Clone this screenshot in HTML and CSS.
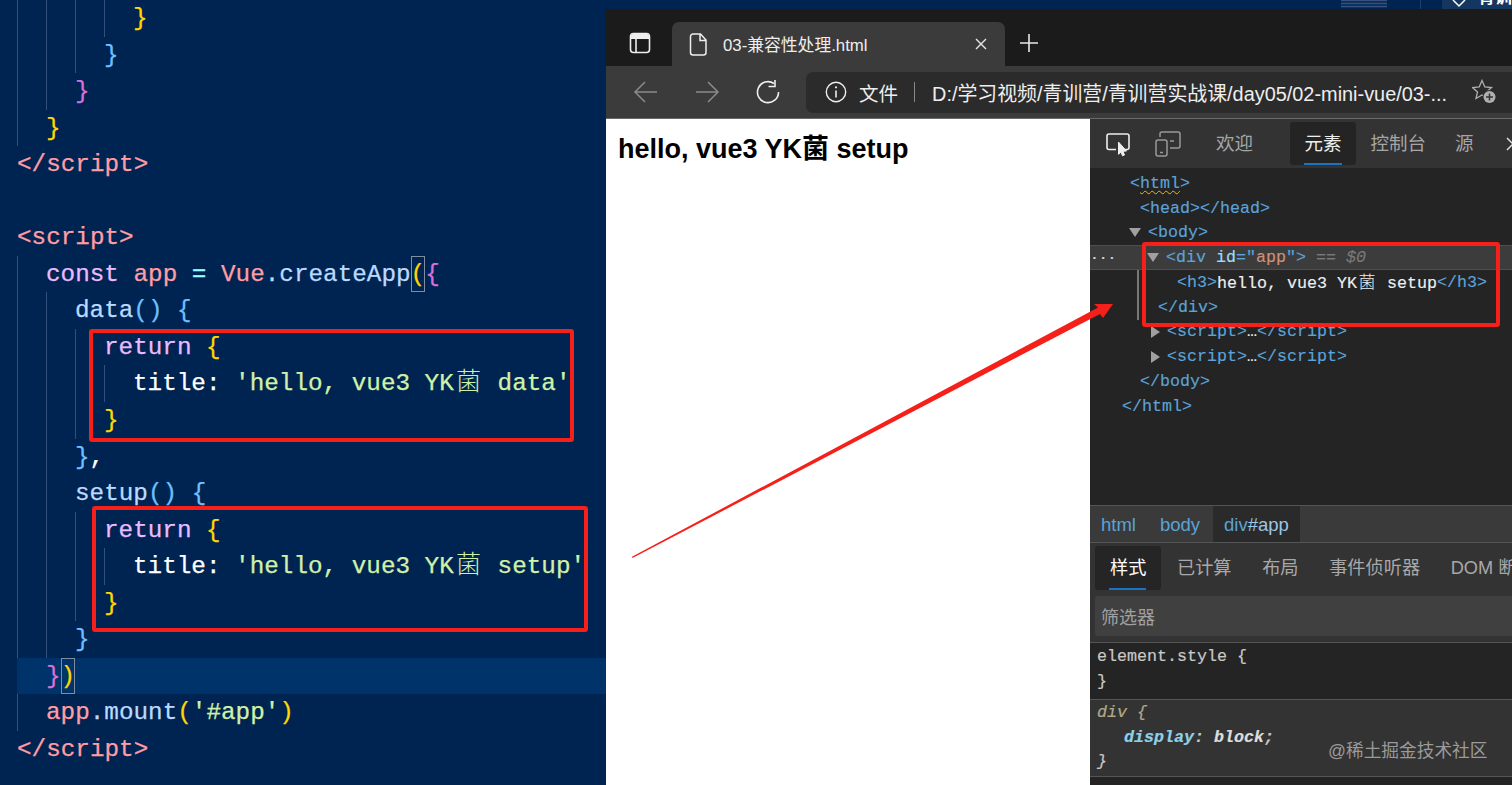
FILE: index.html
```html
<!DOCTYPE html>
<html>
  <head>
    <title>03-兼容性处理</title>
    <link rel="stylesheet" href="styles.css">
  </head>
  <body>
    <div class="desktop">

      <div class="topstrip">
        <div class="mini"></div>
        <div class="strip-line"></div>
        <div class="strip-panel">
          <svg class="strip-chev" width="14" height="8" viewBox="0 0 14 8"><path d="M1 0l6 6 6-6" fill="none" stroke="#fff" stroke-width="1.500"/></svg>
          <span class="strip-text">青训营</span>
        </div>
      </div>

      <div class="editor">
        <div class="line"><i class="ind"></i><i class="ind"></i><i class="ind"></i><i class="ind"></i><span class="yel">}</span></div>
        <div class="line"><i class="ind"></i><i class="ind"></i><i class="ind"></i><span class="blu">}</span></div>
        <div class="line"><i class="ind"></i><i class="ind"></i><span class="pnk">}</span></div>
        <div class="line"><i class="ind"></i><span class="yel">}</span></div>
        <div class="line"><span class="tag">&lt;/script&gt;</span></div>
        <div class="line"></div>
        <div class="line"><span class="tag">&lt;script&gt;</span></div>
        <div class="line"><i class="ind"></i><span class="kw">const</span>&nbsp;<span class="tag">app</span>&nbsp;<span class="op">=</span>&nbsp;<span class="tag">Vue</span><span class="fn">.createApp</span><span class="yel match">(</span><span class="pnk">{</span></div>
        <div class="line"><i class="ind"></i><i class="ind"></i><span class="fn">data</span><span class="blu">()</span>&nbsp;<span class="blu">{</span></div>
        <div class="line"><i class="ind"></i><i class="ind"></i><i class="ind"></i><span class="kw">return</span>&nbsp;<span class="yel">{</span></div>
        <div class="line"><i class="ind"></i><i class="ind"></i><i class="ind"></i><i class="ind"></i><span class="wht">title:</span>&nbsp;<span class="str">'hello, vue3 YK<span class="cjk">菌</span> data'</span></div>
        <div class="line"><i class="ind"></i><i class="ind"></i><i class="ind"></i><span class="yel">}</span></div>
        <div class="line"><i class="ind"></i><i class="ind"></i><span class="blu">}</span><span class="wht">,</span></div>
        <div class="line"><i class="ind"></i><i class="ind"></i><span class="fn">setup</span><span class="blu">()</span>&nbsp;<span class="blu">{</span></div>
        <div class="line"><i class="ind"></i><i class="ind"></i><i class="ind"></i><span class="kw">return</span>&nbsp;<span class="yel">{</span></div>
        <div class="line"><i class="ind"></i><i class="ind"></i><i class="ind"></i><i class="ind"></i><span class="wht">title:</span>&nbsp;<span class="str">'hello, vue3 YK<span class="cjk">菌</span> setup'</span></div>
        <div class="line"><i class="ind"></i><i class="ind"></i><i class="ind"></i><span class="yel">}</span></div>
        <div class="line"><i class="ind"></i><i class="ind"></i><span class="blu">}</span></div>
        <div class="line current"><i class="ind noline"></i><span class="pnk">}</span><span class="yel match">)</span></div>
        <div class="line"><i class="ind"></i><span class="tag">app</span><span class="fn">.mount</span><span class="yel">(</span><span class="str">'#app'</span><span class="yel">)</span></div>
        <div class="line"><span class="tag">&lt;/script&gt;</span></div>
      </div>

      <div class="browser">
        <div class="titlebar">
          <svg class="side-icon" width="22" height="22" viewBox="0 0 22 22"><rect x="1.500" y="1.500" width="19" height="19" rx="3" fill="none" stroke="#eee" stroke-width="1.600"/><path d="M7 7v13" fill="none" stroke="#eee" stroke-width="1.600"/><path d="M2 7V4a2 2 0 0 1 2-2h14a2 2 0 0 1 2 2v3z" fill="#eee"/></svg>
          <div class="tab">
            <svg width="18" height="23" viewBox="0 0 18 23"><path d="M4 1h7.500L17 7v12.500a2.500 2.500 0 0 1-2.500 2.500H4a2.500 2.500 0 0 1-2.500-2.500V3.500A2.500 2.500 0 0 1 4 1zM11 1.500V7.500h6" fill="none" stroke="#eee" stroke-width="1.500"/></svg>
            <span class="tab-name">03-兼容性处理.html</span>
            <svg class="tab-x" width="12" height="12" viewBox="0 0 12 12"><path d="M1 1l10 10M11 1L1 11" stroke="#e8e8e8" stroke-width="1.400"/></svg>
          </div>
          <svg class="plus" width="20" height="20" viewBox="0 0 20 20"><path d="M10 1v18M1 10h18" stroke="#e8e8e8" stroke-width="1.600"/></svg>
        </div>

        <div class="toolbar">
          <svg class="nav" width="26" height="24" viewBox="0 0 26 24"><path d="M24 12H2M12 2L2 12l10 10" fill="none" stroke="#8a8a8a" stroke-width="1.500"/></svg>
          <svg class="nav" width="26" height="24" viewBox="0 0 26 24"><path d="M2 12h22M14 2l10 10-10 10" fill="none" stroke="#8a8a8a" stroke-width="1.500"/></svg>
          <svg class="nav" width="26" height="26" viewBox="0 0 26 26"><path d="M19 4.500A10.500 10.500 0 1 0 23.500 13" fill="none" stroke="#eee" stroke-width="1.600"/><path d="M20 1v6.500h-6.500" fill="none" stroke="#eee" stroke-width="1.600"/></svg>
          <div class="address">
            <svg width="22" height="22" viewBox="0 0 22 22"><circle cx="11" cy="11" r="9.700" fill="none" stroke="#eee" stroke-width="1.400"/><path d="M11 9.500v7" stroke="#eee" stroke-width="1.600"/><circle cx="11" cy="6.300" r="1.100" fill="#eee"/></svg>
            <span class="addr-file">文件</span>
            <span class="addr-sep"></span>
            <span class="addr-url">D:/学习视频/青训营/青训营实战课/day05/02-mini-vue/03-...</span>
            <svg class="star" width="26" height="26" viewBox="0 0 26 26"><path d="M10 1.500L12.800 8 19.500 8.600 14.500 13 16 19.500 10 16 4 19.500 5.500 13 .500 8.600 7.200 8z" fill="none" stroke="#b0b0b0" stroke-width="1.300"/><circle cx="17.500" cy="18" r="7" fill="#2b2b2b"/><circle cx="17.500" cy="18" r="6" fill="#b0b0b0"/><path d="M17.500 14.500v7M14 18h7" stroke="#333" stroke-width="1.500"/></svg>
          </div>
        </div>

        <div class="main">
          <div class="page">
            <h3 class="page-title">hello, vue3 YK菌 setup</h3>
          </div>

          <div class="devtools">
            <div class="dt-tabs">
              <svg class="dt-icon" width="26" height="26" viewBox="0 0 26 26"><path d="M11 18.500H4a2 2 0 0 1-2-2V5a2 2 0 0 1 2-2h18a2 2 0 0 1 2 2v11.500a2 2 0 0 1-2 2h-2" fill="none" stroke="#eee" stroke-width="1.600"/><path d="M13.500 11l8 9-3.500.3 1.500 3.700-2 .8-1.500-3.700-2.500 2.200z" fill="#eee" stroke="#eee" stroke-width="1"/></svg>
              <svg class="dt-icon2" width="26" height="26" viewBox="0 0 26 26"><rect x="1" y="9" width="11" height="16" rx="2" fill="none" stroke="#999" stroke-width="1.500"/><path d="M5 6V3a2 2 0 0 1 2-2h16a2 2 0 0 1 2 2v12a2 2 0 0 1-2 2h-8M19 10h-4" fill="none" stroke="#999" stroke-width="1.500"/><path d="M5 21.500h3" stroke="#999" stroke-width="1.500"/></svg>
              <span class="dt-tab first">欢迎</span>
              <span class="dt-tab on">元素</span>
              <span class="dt-tab">控制台</span>
              <span class="dt-tab">源</span>
              <svg class="dt-more" width="12" height="14" viewBox="0 0 12 14"><path d="M1 1l6 6-6 6" fill="none" stroke="#ddd" stroke-width="1.500"/></svg>
            </div>

            <div class="tree">
              <div class="row p-html"><span class="t">&lt;</span><span class="t wavy">html</span><span class="t">&gt;</span></div>
              <div class="row p-head"><span class="t">&lt;head&gt;&lt;/head&gt;</span></div>
              <div class="row p-body"><i class="tri-down"></i><span class="t">&lt;body&gt;</span></div>
              <div class="row p-div sel"><span class="dots">•••</span><i class="tri-down"></i><span class="t">&lt;div</span>&nbsp;<span class="t-attr">id</span><span class="t">=</span><span class="t">"</span><span class="t-val">app</span><span class="t">"&gt;</span>&nbsp;<span class="t-eq">== $0</span></div>
              <div class="row p-h3 guide"><span class="t">&lt;h3&gt;</span><span class="t-txt">hello, vue3 YK<span class="cjk-s">菌</span> setup</span><span class="t">&lt;/h3&gt;</span></div>
              <div class="row p-cdiv guide"><span class="t">&lt;/div&gt;</span></div>
              <div class="row p-script"><i class="tri-right"></i><span class="t">&lt;script&gt;</span><span class="t-txt">…</span><span class="t">&lt;/script&gt;</span></div>
              <div class="row p-script"><i class="tri-right"></i><span class="t">&lt;script&gt;</span><span class="t-txt">…</span><span class="t">&lt;/script&gt;</span></div>
              <div class="row p-head"><span class="t">&lt;/body&gt;</span></div>
              <div class="row p-chtml"><span class="t">&lt;/html&gt;</span></div>
            </div>

            <div class="crumbs">
              <span class="crumb">html</span>
              <span class="crumb">body</span>
              <span class="crumb on">div<span class="crumb-hash">#app</span></span>
            </div>

            <div class="subtabs">
              <span class="subtab on">样式</span>
              <span class="subtab">已计算</span>
              <span class="subtab">布局</span>
              <span class="subtab">事件侦听器</span>
              <span class="subtab">DOM 断点</span>
            </div>

            <div class="filter-wrap">
              <div class="filter">筛选器</div>
            </div>

            <div class="rule dark">
              <div>element.style {</div>
              <div>}</div>
            </div>
            <div class="rule lite">
              <div class="it sel-name">div {</div>
              <div class="it decl"><span class="prop">display</span>: <span class="pval">block</span>;</div>
              <div class="it">}</div>
            </div>
          </div>
        </div>
      </div>

      <div class="redbox box-a"></div>
      <div class="redbox box-b"></div>
      <div class="redbox box-c"></div>

      <svg class="arrow" width="1512" height="785" viewBox="0 0 1512 785">
        <path d="M632 556.700L1098 307.500 1094 304 1113 304 1103 318 1100 314 632.500 558z" fill="#f5201a"/>
      </svg>

      <div class="watermark">@稀土掘金技术社区</div>
    </div>
  </body>
</html>
```

FILE: styles.css
```css
body{
  margin: 0;
  background-color: #002451;
}

.desktop{
  position: relative;
  width: 1512px;
  height: 785px;
  overflow: hidden;
  background-color: #002451;
}

/* bit of the other window above the browser */
.topstrip{
  position: absolute;
  top: 0;
  left: 1341px;
  right: 0;
  height: 9px;
  display: flex;
  overflow: hidden;
}

.mini{
  flex: none;
  width: 46px;
  height: 8px;
  opacity: 0.6;
  background: repeating-linear-gradient(#5d7099 0 1px, #1b3a68 1px 3px);
}

.strip-line{
  flex: none;
  width: 1px;
  margin-left: 33px;
  background-color: #1f3f6b;
}

.strip-panel{
  flex: 1;
  min-width: 0;
  margin-left: 21px;
  background-color: #15365f;
  padding-left: 10px;
  display: flex;
  gap: 12px;
  overflow: hidden;
}

.strip-chev{
  flex: none;
}

.strip-text{
  font: bold 17px "Noto Sans CJK SC", sans-serif;
  color: #fff;
  line-height: 24px;
  margin-top: -16px;
  white-space: nowrap;
}

/* code editor */
.editor{
  width: 607px;
  font-family: "Liberation Mono", "Noto Sans CJK SC", monospace;
  font-size: 24.3px;
  -webkit-text-stroke: 0.25px;
  color: #fff;
}

.line{
  height: 36.55px;
  line-height: 37px;
  display: flex;
  white-space: pre;
  padding-left: 17px;
}

.current{
  background-color: #003369;
  margin-left: 17px;
  padding-left: 0;
}

.ind{
  width: 29px;
  height: 36.6px;
  flex: none;
  box-sizing: border-box;
  border-left: 1px solid #33507b;
}

.noline{
  border-left-color: transparent;
}

.tag{ color: #ff9da4; }
.kw{ color: #ebbbff; }
.fn{ color: #bbdaff; }
.op{ color: #99ffff; }
.wht{ color: #fff; }
.str{ color: #d1f1a9; }
.yel{ color: #ffd700; }
.pnk{ color: #da70d6; }
.blu{ color: #6cc0ff; }

.match{
  box-sizing: border-box;
  width: 14.6px;
  height: 36px;
  outline: 1px solid #7f8d9e;
  outline-offset: -1px;
}

.cjk{
  display: inline-block;
  width: 29.2px;
  font-family: "Noto Sans CJK SC", sans-serif;
  font-weight: 300;
  font-size: 25px;
  line-height: 1;
  text-align: center;
  -webkit-text-stroke: 0;
}

/* browser window */
.browser{
  position: absolute;
  left: 606px;
  top: 9px;
  width: 906px;
  height: 776px;
  display: flex;
  flex-direction: column;
  font-family: "Liberation Sans", "Noto Sans CJK SC", sans-serif;
  background-color: #1b1b1b;
}

.titlebar{
  height: 57px;
  flex: none;
  display: flex;
  align-items: flex-end;
  background-color: #1b1b1b;
}

.side-icon{
  margin: 0 21px 12px 23px;
}

.tab{
  width: 333px;
  height: 44px;
  box-sizing: border-box;
  background-color: #3b3b3b;
  border-radius: 7px 7px 0 0;
  display: flex;
  align-items: center;
  padding: 0 18px 0 17px;
  color: #eee;
  font-size: 16.800px;
}

.tab-name{
  margin-left: 16px;
  flex: 1;
}

.plus{
  margin: 0 0 13px 14px;
}

.toolbar{
  height: 53px;
  flex: none;
  display: flex;
  align-items: center;
  gap: 35px;
  padding-left: 27px;
  box-sizing: border-box;
  background-color: #3b3b3b;
  border-bottom: 1px solid #6a6a6a;
}

.address{
  flex: 1;
  height: 41px;
  margin-left: -10px;
  border-radius: 7px 0 0 7px;
  background-color: #2b2b2b;
  display: flex;
  align-items: center;
  padding-left: 19px;
  color: #eee;
}

.addr-file{
  font-size: 19.500px;
  margin-left: 12px;
}

.addr-sep{
  width: 1px;
  height: 20px;
  margin: 0 17px 0 16px;
  background-color: #888;
}

.addr-url{
  font-size: 19.900px;
  width: 514px;
  white-space: nowrap;
}

.star{
  flex: none;
  margin-left: 26px;
}

.main{
  flex: 1;
  min-height: 0;
  display: flex;
}

.page{
  width: 484px;
  flex: none;
  background-color: #fff;
}

.page-title{
  margin: 13px 0 0 12px;
  font-size: 27px;
  line-height: 34px;
  font-weight: bold;
  color: #000;
}

/* devtools */
.devtools{
  flex: 1;
  min-width: 0;
  overflow: hidden;
  display: flex;
  flex-direction: column;
  background-color: #242424;
  color: #ccc;
}

.dt-tabs{
  height: 49px;
  flex: none;
  display: flex;
  align-items: center;
  background-color: #333;
  box-sizing: border-box;
  font-size: 18.500px;
  color: #a6a6a6;
}

.dt-icon{
  flex: none;
  margin-left: 15px;
}

.dt-icon2{
  flex: none;
  margin-left: 24px;
}

.dt-tab{
  flex: none;
  padding: 0 14.500px;
  height: 43px;
  line-height: 43px;
  white-space: nowrap;
  box-sizing: border-box;
}

.dt-tab.first{
  margin-left: 20.500px;
  margin-right: 22.500px;
}

.dt-tab.on{
  color: #eee;
  background-color: #242424;
  border-radius: 3px;
  background-image: linear-gradient(#1a74c0, #1a74c0);
  background-repeat: no-repeat;
  background-size: 38px 2px;
  background-position: 14px 41px;
}

.dt-more{
  flex: none;
  margin-left: 18px;
}

.tree{
  height: 337px;
  flex: none;
  padding-top: 3px;
  box-sizing: border-box;
  font-family: "Liberation Mono", "Noto Sans CJK SC", monospace;
  font-size: 16.670px;
  -webkit-text-stroke: 0.15px;
}

.row{
  height: 24.780px;
  display: flex;
  align-items: center;
  white-space: pre;
  box-sizing: border-box;
}

.t{ color: #5ba3d8; }
.t-attr{ color: #9cdcfe; }
.t-val{ color: #ce9178; }
.t-txt{ color: #eee; }
.t-eq{ color: #7a7a7a; font-style: italic; }

.wavy{
  text-decoration: underline wavy #e4b820 1px;
  text-underline-offset: 2px;
}

.cjk-s{
  display: inline-block;
  width: 20px;
  text-align: center;
  font-family: "Noto Sans CJK SC", sans-serif;
  font-weight: 300;
  font-size: 17px;
  line-height: 1;
  -webkit-text-stroke: 0;
}

.p-html{ padding-left: 40px; }
.p-head{ padding-left: 50px; }
.p-body{ padding-left: 39px; }
.p-div{ padding-left: 2px; }
.p-h3{ padding-left: 87px; }
.p-cdiv{ padding-left: 68px; }
.p-script{ padding-left: 61px; }
.p-chtml{ padding-left: 32px; }

.sel{
  background-color: #3c3c3c;
  border-top: 1px solid #4e4e4e;
  border-bottom: 1px solid #4e4e4e;
}

.guide{
  background: linear-gradient(#777, #777) no-repeat 47px 0 / 2px 100%;
}

.dots{
  width: 55px;
  font-size: 8px;
  letter-spacing: 4px;
  color: #ddd;
}

.tri-down{
  width: 0;
  height: 0;
  border-left: 6px solid transparent;
  border-right: 6px solid transparent;
  border-top: 9px solid #a0a0a0;
  margin-right: 7px;
}

.tri-right{
  width: 0;
  height: 0;
  border-top: 6px solid transparent;
  border-bottom: 6px solid transparent;
  border-left: 9px solid #a0a0a0;
  margin-right: 7px;
}

.crumbs{
  height: 38px;
  flex: none;
  box-sizing: border-box;
  display: flex;
  gap: 2px;
  background-color: #3a3a3a;
  border-top: 1px solid #555;
  border-bottom: 1px solid #555;
  font-size: 18.500px;
}

.crumb{
  padding: 0 11px;
  line-height: 37px;
  color: #5ba3d8;
}

.crumb.on{
  background-color: #2a2a2a;
}

.crumb-hash{
  color: #9cc6e6;
}

.subtabs{
  height: 53px;
  flex: none;
  display: flex;
  box-sizing: border-box;
  padding: 3px 0 0 5px;
  gap: 0.600px;
  background-color: #333;
  font-size: 18.200px;
  color: #a8a8a8;
  white-space: nowrap;
}

.subtab{
  padding: 0 15px;
  height: 44px;
  line-height: 45px;
}

.subtab.on{
  color: #fff;
  background-color: #252525;
  border-radius: 3px;
  background-image: linear-gradient(#1a74c0, #1a74c0);
  background-repeat: no-repeat;
  background-size: 37px 2px;
  background-position: 14px 42px;
}

.filter-wrap{
  height: 46px;
  flex: none;
  box-sizing: border-box;
  padding: 0 0 6px 5px;
  background-color: #333;
}

.filter{
  height: 40px;
  line-height: 44px;
  padding-left: 6px;
  background-color: #404040;
  border-radius: 3px 0 0 3px;
  font-size: 18px;
  color: #a0a0a0;
}

.rule{
  font-family: "Liberation Mono", monospace;
  font-size: 16.670px;
  line-height: 24.500px;
  padding-left: 7px;
  color: #c8c8c8;
  border-top: 1px solid #555;
  box-sizing: border-box;
  -webkit-text-stroke: 0.2px;
}

.dark{
  height: 57px;
  padding-top: 2px;
  background-color: #242424;
}

.lite{
  height: 78px;
  padding-top: 1px;
  background-color: #333;
  border-bottom: 1px solid #555;
}

.it{
  font-style: italic;
}

.sel-name{
  color: #b0a98a;
}

.decl{
  padding-left: 27px;
  font-weight: bold;
}

.prop{
  color: #8fd0e8;
}

.pval{
  color: #ddd;
}

/* annotations on top of the screenshot */
.redbox{
  position: absolute;
  box-sizing: border-box;
  border: 4px solid #f5201a;
  border-radius: 3px;
}

.box-a{ left: 89px; top: 329px; width: 485px; height: 113px; }
.box-b{ left: 92px; top: 506px; width: 496px; height: 126px; }
.box-c{ left: 1142px; top: 242px; width: 358px; height: 85px; }

.arrow{
  position: absolute;
  left: 0;
  top: 0;
}

.watermark{
  position: absolute;
  left: 1328px;
  top: 739px;
  font-family: "Liberation Sans", "Noto Sans CJK SC", sans-serif;
  font-size: 17.700px;
  line-height: 24px;
  color: #9a9a9a;
  white-space: nowrap;
}
```
